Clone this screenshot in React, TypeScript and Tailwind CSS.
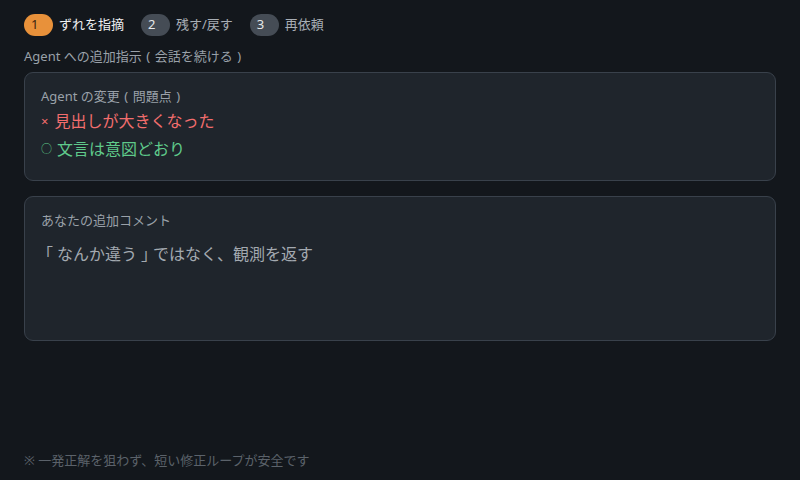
import React from "react";

const font = { fontFamily: '"Noto Sans", "Noto Sans CJK JP", sans-serif' };

function P({ c, w }: { c: string; w: string }) {
  return <span className={"inline-block text-center " + w}>{c}</span>;
}

function Step({ n, label, active }: { n: string; label: string; active?: boolean }) {
  return (
    <div className="flex items-center gap-[6px]">
      <span
        className={
          "flex h-[22px] w-[29px] items-center rounded-full pl-[7px] text-[13px] " +
          (active ? "bg-[#e8913a] text-[#3a2410]" : "bg-[#454c55] text-[#e6e8ea]")
        }
      >
        {n}
      </span>
      <span className={"text-[13px] " + (active ? "text-[#eef0f2]" : "text-[#a8aeb5]")}>{label}</span>
    </div>
  );
}

export default function App() {
  return (
    <div style={font} className="flex h-[480px] w-[800px] flex-col bg-[#13171c] px-6 pt-[14px]">
      <div className="flex items-center gap-[17px]">
        <Step n="1" label="ずれを指摘" active />
        <Step n="2" label="残す/戻す" />
        <Step n="3" label="再依頼" />
      </div>
      <div className="mt-[11px] text-[13px] leading-[18px] text-[#9aa1a9]">
        Agent への追加指示<P c="(" w="w-[13px]" />会話を続ける<P c=")" w="w-[13px]" />
      </div>
      <div className="mt-[7px] h-[109px] rounded-[9px] border border-[#39414b] bg-[#1f252c] px-4 pt-[14px]">
        <div className="text-[13px] leading-[18px] text-[#9aa1a9]">
          Agent の変更<P c="(" w="w-[13px]" />問題点<P c=")" w="w-[13px]" />
        </div>
        <div className="mt-[5px] flex items-center gap-[6px] text-[16px] leading-[22px] text-[#f26d6d]">
          <span className="text-[13px]">×</span>
          <span>見出しが大きくなった</span>
        </div>
        <div className="mt-[6px] flex items-center gap-[5px] text-[16px] leading-[22px] text-[#5fca8b]">
          <span className="text-[11px]">○</span>
          <span>文言は意図どおり</span>
        </div>
      </div>
      <div className="mt-[15px] h-[145px] rounded-[9px] border border-[#39414b] bg-[#1f252c] px-4 pt-[14px]">
        <div className="text-[13px] leading-[18px] text-[#9aa1a9]">あなたの追加コメント</div>
        <div className="mt-[14px] text-[16px] leading-[22px] text-[#a3a9b0]">
          <P c="｢" w="w-[16px]" />なんか違う<P c="｣" w="w-[16px]" />ではなく、観測を返す
        </div>
      </div>
      <div className="mt-auto pb-[11px] text-[13px] leading-[18px] text-[#5b626a]">※ 一発正解を狙わず、短い修正ループが安全です</div>
    </div>
  );
}
